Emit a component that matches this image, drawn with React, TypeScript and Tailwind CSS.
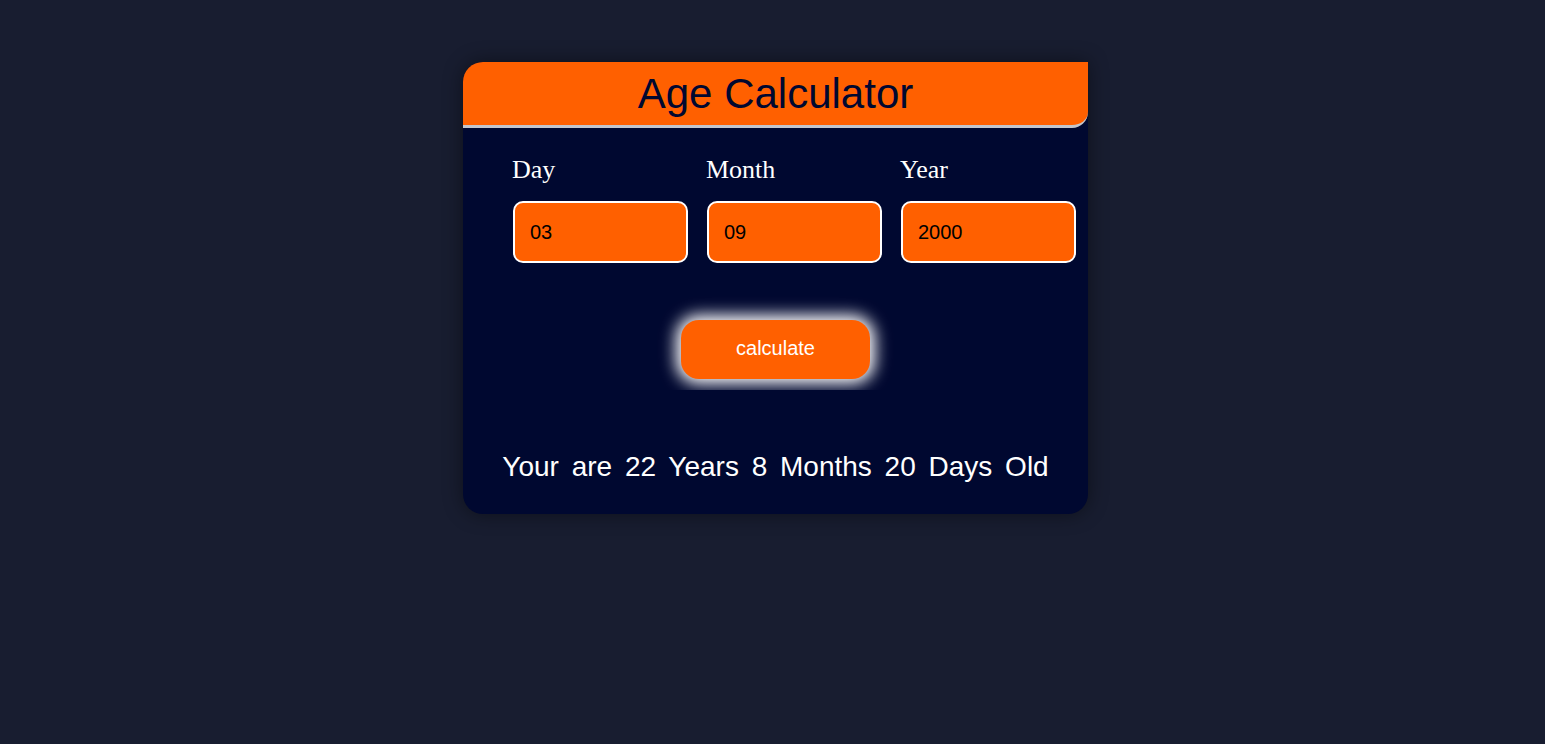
import { useState } from "react";

const fields = [
  { label: "Day", value: "03" },
  { label: "Month", value: "09" },
  { label: "Year", value: "2000" },
];

const App = () => {
  const [values, setValues] = useState(fields.map((f) => f.value));

  return (
    <div className="flex min-h-[744px] w-full justify-center bg-[#181d30] pl-[6px] pt-[62px]">
      <div className="h-[452px] w-[625px] overflow-hidden rounded-b-[20px] rounded-tl-[20px] bg-[#000830] shadow-[0_0_20px_rgba(0,0,0,0.45)]">
        <div className="flex h-[66px] items-center justify-center rounded-br-[16px] border-b-[3px] border-[#c3c6cc] bg-[#ff6000]">
          <h1 className="font-['Liberation_Sans',Arial,sans-serif] text-[42px] leading-none text-[#000830]">
            Age Calculator
          </h1>
        </div>

        <div className="mt-[27px] grid grid-cols-[175px_175px_175px] gap-x-[19px] pl-[50px]">
          {fields.map((f, i) => (
            <div key={f.label} className="flex flex-col">
              <label className="-ml-px font-['Liberation_Serif','Times_New_Roman',serif] text-[26px] leading-[30px] text-white">
                {f.label}
              </label>
              <input
                className="mt-[16px] h-[62px] rounded-[10px] border-2 border-white bg-[#ff6000] pl-[15px] font-['Liberation_Sans',Arial,sans-serif] text-[20px] text-black outline-none"
                value={values[i]}
                onChange={({ target: { value } }) =>
                  setValues(values.map((v, j) => (j === i ? value : v)))
                }
              />
            </div>
          ))}
        </div>

        <div className="flex justify-center overflow-hidden pb-[11px] pt-[57px]">
          <button
            type="button"
            className="h-[59px] w-[189px] rounded-[18px] bg-[#ff6000] pb-[3px] font-['Liberation_Sans',Arial,sans-serif] text-[20px] leading-none text-white shadow-[0_0_16px_5px_#ffffff]"
          >
            calculate
          </button>
        </div>

        <p className="pt-[61px] text-center font-['Liberation_Sans',Arial,sans-serif] text-[28px] leading-[32px] text-white [word-spacing:5px]">
          Your are 22 Years 8 Months 20 Days Old
        </p>
      </div>
    </div>
  );
};

export default App;
